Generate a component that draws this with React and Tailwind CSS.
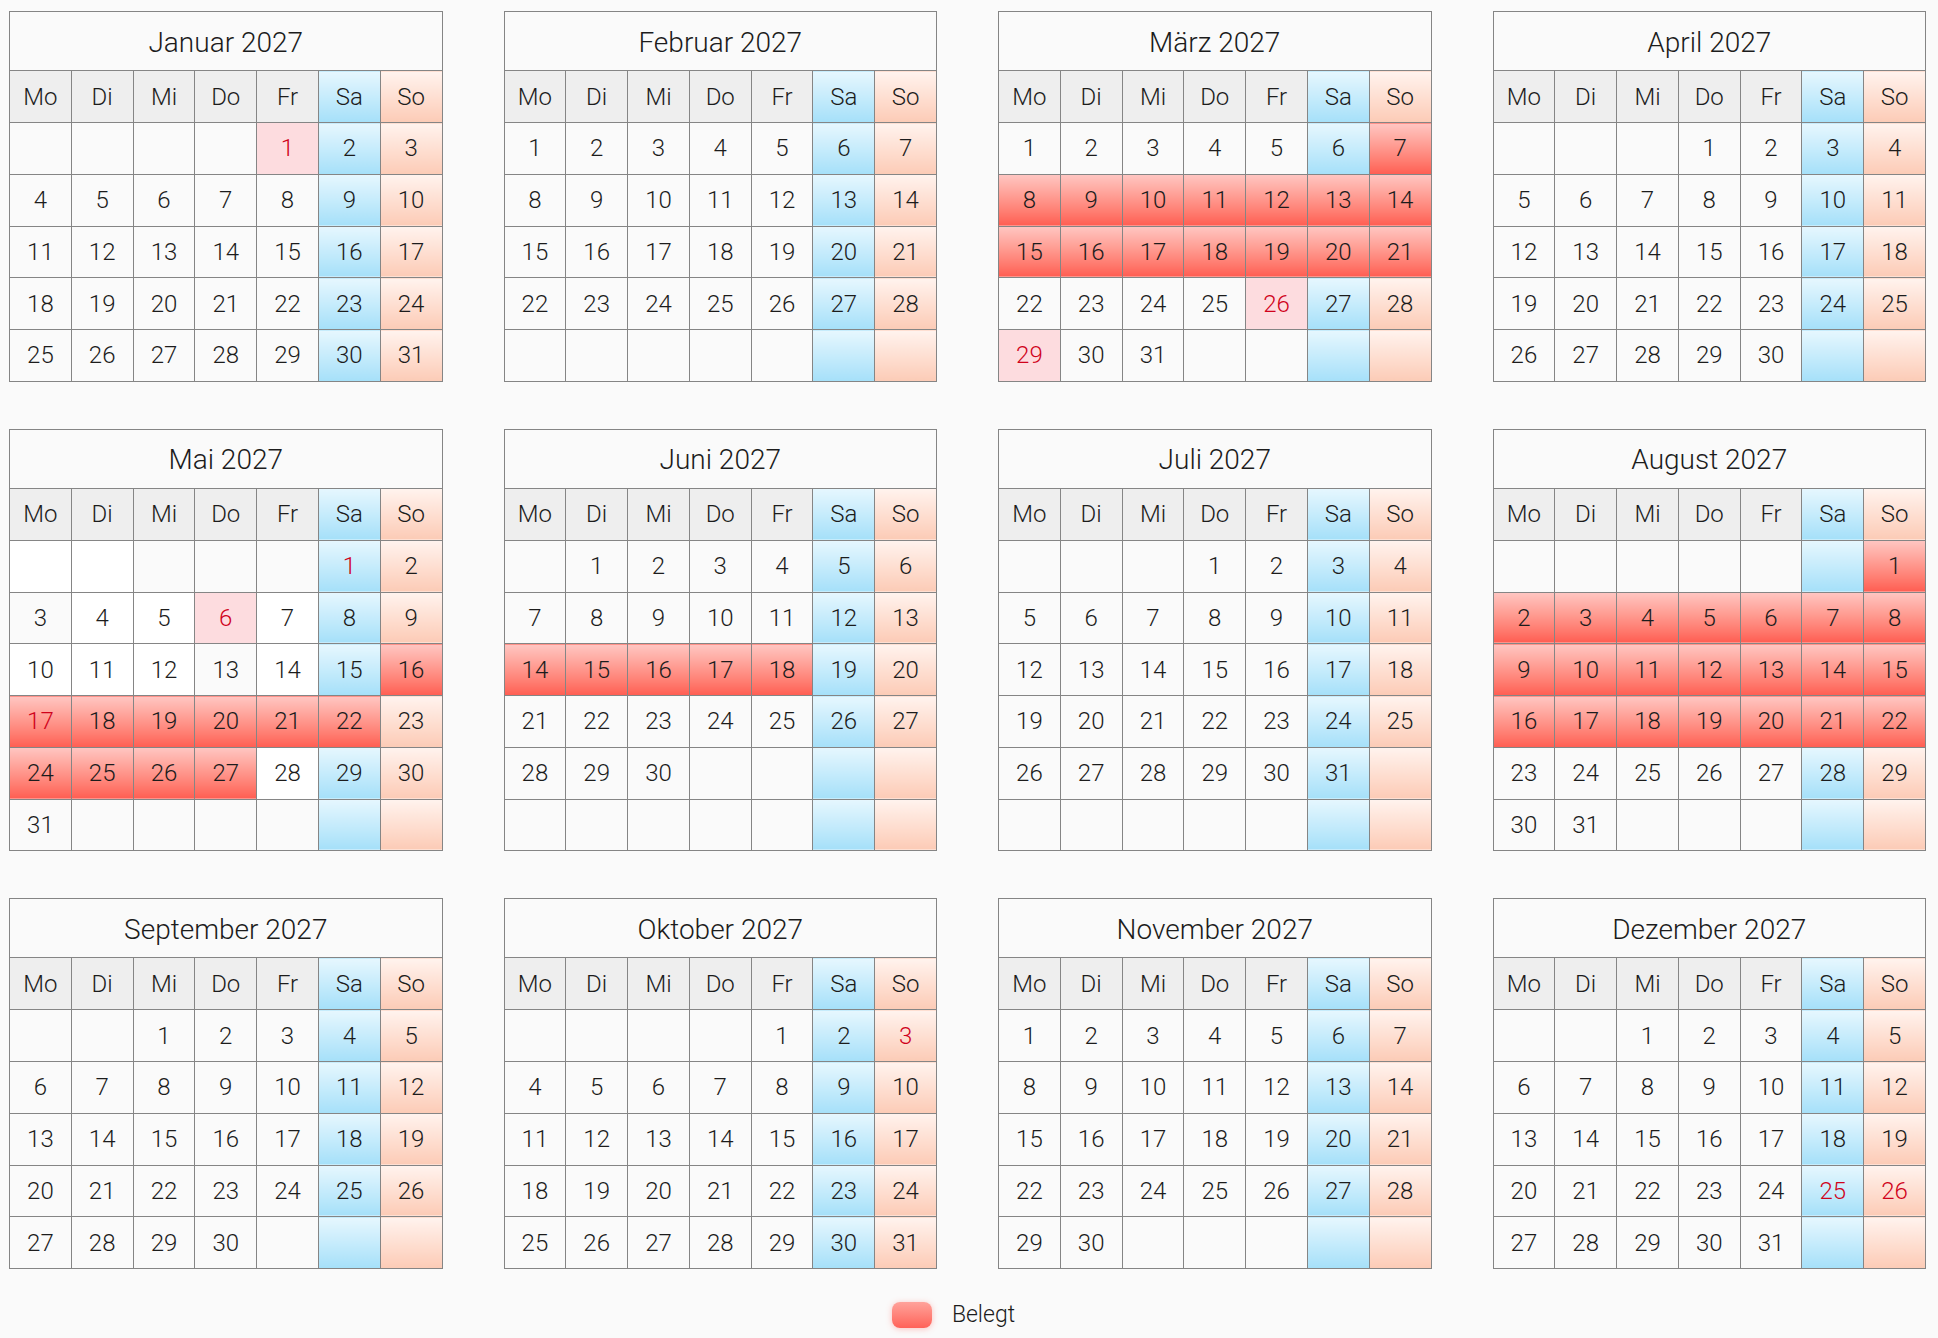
const MONTHS = ['Januar', 'Februar', 'März', 'April', 'Mai', 'Juni', 'Juli', 'August', 'September', 'Oktober', 'November', 'Dezember'];
const DAYS = ['Mo', 'Di', 'Mi', 'Do', 'Fr', 'Sa', 'So'];
const YEAR = 2027;

const range = (a, b) => Array.from({ length: b - a + 1 }, (_, i) => a + i);

// belegte Tage je Monat (0-basiert)
const BOOKED = {
  2: range(7, 21),
  4: [...range(16, 22), ...range(24, 27)],
  5: range(14, 18),
  7: range(1, 22),
};

// Feiertage
const HOLIDAYS = {
  0: [1],
  2: [26, 29],
  4: [1, 6, 17],
  9: [3],
  11: [25, 26],
};

// einzelne weisse Zellen (Index im Raster)
const WHITE = {
  4: [0, 1, 8, 9, 11, 14, 15, 16, 18, 32],
};

function monthInfo(m) {
  const offset = (new Date(YEAR, m, 1).getDay() + 6) % 7;
  const days = new Date(YEAR, m + 1, 0).getDate();
  return { offset, days, weeks: Math.ceil((offset + days) / 7) };
}

const headClass = [
  'bg-[#eeeeee]', 'bg-[#eeeeee]', 'bg-[#eeeeee]', 'bg-[#eeeeee]', 'bg-[#eeeeee]',
  'bg-linear-to-b from-[#e6f7fe] to-[#a5e0f9]',
  'bg-linear-to-b from-[#fff3ee] to-[#fccbb6]',
];

function cellClass(m, day, col, idx) {
  const isBooked = day && (BOOKED[m] || []).includes(day);
  const isHoliday = day && (HOLIDAYS[m] || []).includes(day);
  let bg = (WHITE[m] || []).includes(idx) ? 'bg-white' : 'bg-[#fafafa]';
  if (col === 5) bg = 'bg-linear-to-b from-[#e6f7fe] to-[#a5e0f9]';
  if (col === 6) bg = 'bg-linear-to-b from-[#fff3ee] to-[#fccbb6]';
  if (isHoliday && col < 5) bg = 'bg-[#fddcdf]';
  if (isBooked) bg = 'bg-linear-to-b from-[#ffc6c2] to-[#ff5d52]';
  const color = isHoliday ? 'text-[#d0021b]' : 'text-[#1c1c1c]';
  return `${bg} ${color}`;
}

function Month({ m, weeks }) {
  const { offset, days } = monthInfo(m);
  const cells = Array.from({ length: weeks * 7 }, (_, i) => {
    const d = i - offset + 1;
    return d >= 1 && d <= days ? d : null;
  });
  const rows = Array.from({ length: weeks }, (_, r) => cells.slice(r * 7, r * 7 + 7));

  return (
    <table className="w-full table-fixed border-collapse">
      <thead>
        <tr>
          <th colSpan={7} className="h-[59px] border border-[#858585] bg-[#fafafa] pt-[3px] text-[28px] font-light text-[#1c1c1c]">
            {MONTHS[m]} {YEAR}
          </th>
        </tr>
        <tr>
          {DAYS.map((d, i) => (
            <th key={d} className={`h-[52px] border border-[#858585] text-[24px] font-light text-[#1c1c1c] ${headClass[i]}`}>
              {d}
            </th>
          ))}
        </tr>
      </thead>
      <tbody>
        {rows.map((row, r) => (
          <tr key={r}>
            {row.map((day, c) => (
              <td key={c} className={`h-[51.75px] border border-[#858585] text-center text-[24px] ${cellClass(m, day, c, r * 7 + c)}`}>
                {day}
              </td>
            ))}
          </tr>
        ))}
      </tbody>
    </table>
  );
}

export default function App() {
  const groups = [[0, 1, 2, 3], [4, 5, 6, 7], [8, 9, 10, 11]];

  return (
    <div className="min-h-screen bg-[#fafafa] pl-[9px] pt-[11px] font-[Roboto,sans-serif] font-light text-[#1c1c1c]">
      <div className="flex w-[1917px] flex-col gap-[47px]">
        {groups.map((g, gi) => {
          const weeks = Math.max(...g.map(m => monthInfo(m).weeks));
          return (
            <div key={gi} className="grid grid-cols-4 gap-x-[61px]">
              {g.map(m => (
                <Month key={m} m={m} weeks={weeks} />
              ))}
            </div>
          );
        })}
      </div>

      {/* Legende */}
      <div className="mt-[29px] flex items-center justify-center gap-[20px] pr-[40px]">
        <div className="h-[26px] w-[40px] rounded-[8px] bg-linear-to-b from-[#ffa29b] to-[#ff6158] shadow-[0_1px_6px_rgba(255,90,80,0.35)]"></div>
        <span className="text-[23px] font-light">Belegt</span>
      </div>
    </div>
  );
}
